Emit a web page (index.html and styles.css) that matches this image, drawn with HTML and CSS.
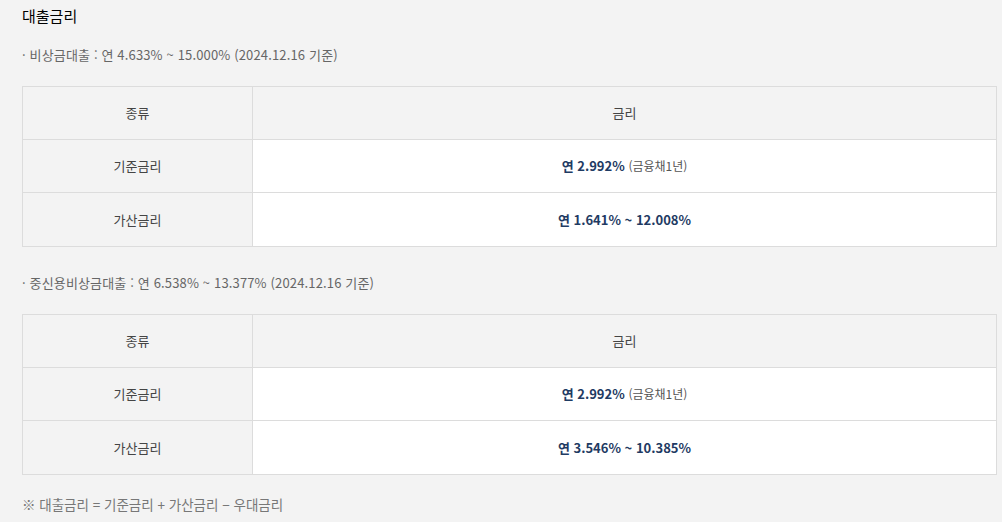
FILE: index.html
```html
<!DOCTYPE html>
<html lang="ko">
<head>
<meta charset="utf-8">
<link rel="stylesheet" href="styles.css">
</head>
<body>
<div class="page">
  <h2 class="title">대출금리</h2>
  <p class="bullet">· 비상금대출 : 연 4.633% ~ 15.000% (2024.12.16 기준)</p>
  <table class="rate">
    <tr class="head"><th class="kind">종류</th><th>금리</th></tr>
    <tr><th class="kind">기준금리</th><td><b>연 2.992%</b> <span class="sub">(금융채1년)</span></td></tr>
    <tr class="last"><th class="kind">가산금리</th><td><b>연 1.641% ~ 12.008%</b></td></tr>
  </table>
  <p class="bullet second">· 중신용비상금대출 : 연 6.538% ~ 13.377% (2024.12.16 기준)</p>
  <table class="rate">
    <tr class="head"><th class="kind">종류</th><th>금리</th></tr>
    <tr><th class="kind">기준금리</th><td><b>연 2.992%</b> <span class="sub">(금융채1년)</span></td></tr>
    <tr class="last"><th class="kind">가산금리</th><td><b>연 3.546% ~ 10.385%</b></td></tr>
  </table>
  <p class="note">※ 대출금리 = 기준금리 + 가산금리 − 우대금리</p>
</div>
</body>
</html>
```
FILE: styles.css
```css
html, body {
  margin: 0;
  padding: 0;
  background: #f3f3f3;
}
body {
  font-family: "Noto Sans CJK KR", "Noto Sans", sans-serif;
  color: #333;
}
.page {
  padding: 6px 0 0 22px;
}
.title {
  margin: 0;
  font-size: 15px;
  font-weight: 400;
  line-height: 20px;
  color: #000;
}
.bullet {
  margin: 19px 0 21px;
  font-size: 13px;
  letter-spacing: 0.15px;
  line-height: 20px;
  color: #666;
}
.bullet.second {
  margin-top: 26px;
}
.rate {
  width: 975px;
  border-collapse: collapse;
  border: 1px solid #dcdcdc;
  font-size: 13px;
}
.rate th, .rate td {
  border: 1px solid #dcdcdc;
  height: 52px;
  padding: 0;
  text-align: center;
  vertical-align: middle;
  line-height: 18px;
  font-weight: 400;
  color: #444;
}
.rate .last th, .rate .last td {
  height: 53px;
}
.rate .kind {
  width: 229px;
  background: #f3f3f3;
}
.rate .head th {
  background: #f3f3f3;
}
.rate td {
  background: #fff;
}
.rate td b {
  font-weight: 700;
  color: #1f3b63;
}
.rate .sub {
  font-size: 12px;
  color: #555;
}
.note {
  margin: 19px 0 0;
  font-size: 13.5px;
  line-height: 20px;
  color: #777;
}
```
